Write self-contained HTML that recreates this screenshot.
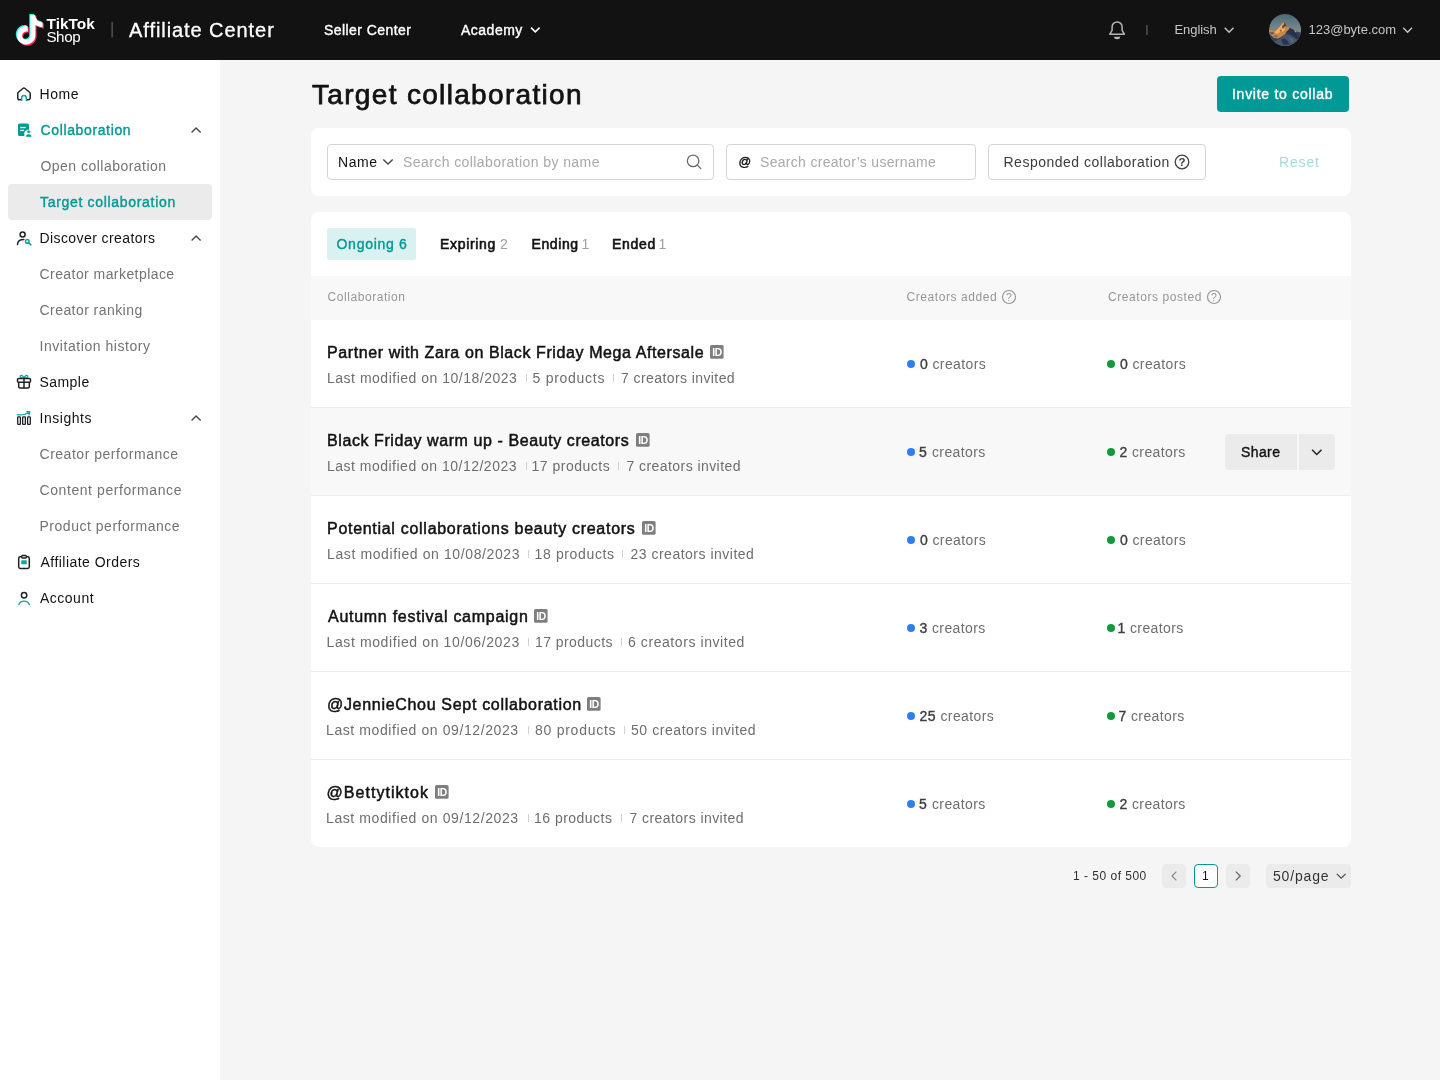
<!DOCTYPE html>
<html lang="en">
<head>
<meta charset="utf-8">
<title>Target collaboration - Affiliate Center</title>
<style>
*{box-sizing:border-box;margin:0;padding:0}
html,body{width:1440px;height:1080px;overflow:hidden;background:#f5f5f5;font-family:"Liberation Sans",sans-serif;color:#121212}
.a{position:absolute}
.t{position:absolute;white-space:nowrap}
.m{-webkit-text-stroke:0.38px currentColor}
.b{font-weight:bold}
#hdr{position:absolute;left:0;top:0;width:1440px;height:60px;background:#121212}
#side{position:absolute;left:0;top:60px;width:220px;height:1020px;background:#fff}
.card{position:absolute;background:#fff;border-radius:8px}
.inp{position:absolute;height:36px;top:144px;border:1px solid #d4d4d4;border-radius:4px;background:#fff}
.sp{position:absolute;width:1px;height:8px;background:#d2d2d2}
.dot{position:absolute;width:8px;height:8px;border-radius:50%}
.idb{position:absolute;width:14px;height:14px}
.idb svg,.ic svg{display:block}
.ic{position:absolute;left:16px;width:16px;height:16px}
.ln{position:absolute;left:311px;width:1040px;height:1px;background:#ededed}
.pb{position:absolute;top:864px;width:24px;height:24px;border-radius:4px;background:#ebebeb}
svg{overflow:visible}
</style>
</head>
<body>
<div id="wrap" style="position:absolute;left:0;top:0;width:1440px;height:1080px;will-change:transform">
<div id="hdr"></div>
<div id="side"></div>
<!-- header logo -->
<svg class="a" style="left:0;top:0" width="120" height="60" viewBox="0 0 120 60">
  <g transform="translate(15 15) scale(1.233)">
    <path id="nt" d="M12.525.02c1.31-.02 2.61-.01 3.91-.02.08 1.53.63 3.09 1.75 4.17 1.12 1.11 2.7 1.62 4.24 1.79v4.03c-1.44-.05-2.89-.35-4.2-.97-.57-.26-1.1-.59-1.62-.93-.01 2.92.01 5.84-.02 8.75-.08 1.4-.54 2.79-1.35 3.94-1.31 1.92-3.58 3.17-5.91 3.21-1.43.08-2.86-.31-4.08-1.03-2.02-1.19-3.44-3.37-3.65-5.71-.02-.5-.03-1-.01-1.49.18-1.9 1.12-3.72 2.58-4.96 1.66-1.44 3.98-2.13 6.15-1.72.02 1.48-.04 2.96-.04 4.44-.99-.32-2.15-.23-3.02.37-.63.41-1.11 1.04-1.36 1.75-.21.51-.15 1.07-.14 1.61.24 1.64 1.82 3.02 3.5 2.87 1.12-.01 2.19-.66 2.77-1.61.19-.33.4-.67.41-1.06.1-1.79.06-3.57.07-5.36.01-4.03-.01-8.05.02-12.07z" fill="#25f4ee" transform="translate(-0.9 -0.9)"/>
    <path d="M12.525.02c1.31-.02 2.61-.01 3.91-.02.08 1.53.63 3.09 1.75 4.17 1.12 1.11 2.7 1.62 4.24 1.79v4.03c-1.44-.05-2.89-.35-4.2-.97-.57-.26-1.1-.59-1.62-.93-.01 2.92.01 5.84-.02 8.75-.08 1.4-.54 2.79-1.35 3.94-1.31 1.92-3.58 3.17-5.91 3.21-1.43.08-2.86-.31-4.08-1.03-2.02-1.19-3.44-3.37-3.65-5.71-.02-.5-.03-1-.01-1.49.18-1.9 1.12-3.72 2.58-4.96 1.66-1.44 3.98-2.13 6.15-1.72.02 1.48-.04 2.96-.04 4.44-.99-.32-2.15-.23-3.02.37-.63.41-1.11 1.04-1.36 1.75-.21.51-.15 1.07-.14 1.61.24 1.64 1.82 3.02 3.5 2.87 1.12-.01 2.19-.66 2.77-1.61.19-.33.4-.67.41-1.06.1-1.79.06-3.57.07-5.36.01-4.03-.01-8.05.02-12.07z" fill="#fe2c55" transform="translate(0.9 0.9)"/>
    <path d="M12.525.02c1.31-.02 2.61-.01 3.91-.02.08 1.53.63 3.09 1.75 4.17 1.12 1.11 2.7 1.62 4.24 1.79v4.03c-1.44-.05-2.89-.35-4.2-.97-.57-.26-1.1-.59-1.62-.93-.01 2.92.01 5.84-.02 8.75-.08 1.4-.54 2.79-1.35 3.94-1.31 1.92-3.58 3.17-5.91 3.21-1.43.08-2.86-.31-4.08-1.03-2.02-1.19-3.44-3.37-3.65-5.71-.02-.5-.03-1-.01-1.49.18-1.9 1.12-3.72 2.58-4.96 1.66-1.44 3.98-2.13 6.15-1.72.02 1.48-.04 2.96-.04 4.44-.99-.32-2.15-.23-3.02.37-.63.41-1.11 1.04-1.36 1.75-.21.51-.15 1.07-.14 1.61.24 1.64 1.82 3.02 3.5 2.87 1.12-.01 2.19-.66 2.77-1.61.19-.33.4-.67.41-1.06.1-1.79.06-3.57.07-5.36.01-4.03-.01-8.05.02-12.07z" fill="#fff"/>
  </g>
  <text x="46.6" y="28.5" font-family="Liberation Sans, sans-serif" font-size="15.4" font-weight="bold" fill="#fff" letter-spacing="0">TikTok</text>
  <text x="46.4" y="42" font-family="Liberation Sans, sans-serif" font-size="15.2" fill="#fff" letter-spacing="-0.4">Shop</text>
  <rect x="111.5" y="22" width="1.3" height="15.5" fill="#5a5a5a"/>
</svg>
<!-- header chevrons, bell, avatar -->
<svg class="a" style="left:0;top:0" width="1440" height="60" viewBox="0 0 1440 60" fill="none">
  <path d="M531 27.6l4.3 4.3 4.3-4.3" stroke="#fff" stroke-width="1.5"/>
  <path d="M1224.7 27.8l4.4 4.4 4.4-4.4" stroke="#c6c6c6" stroke-width="1.4"/>
  <path d="M1403.2 27.8l4.4 4.4 4.4-4.4" stroke="#c6c6c6" stroke-width="1.4"/>
  <rect x="1146.200" y="25" width="1.500" height="10" fill="#505050"/>
  <!-- bell -->
  <path d="M1109.800 34.200l2.300-3.900v-3.400a5 5 0 0 1 10 0v3.400l2.300 3.900z" stroke="#b4b4b4" stroke-width="1.500" stroke-linejoin="round"/>
  <path d="M1114 36.700h6.200a3.100 2.500 0 0 1-6.200 0z" fill="#b4b4b4"/>
  <!-- avatar -->
  <defs>
    <linearGradient id="sky" x1="0" y1="0" x2="0" y2="1"><stop offset="0" stop-color="#4a6573"/><stop offset="0.55" stop-color="#7a9091"/><stop offset="1" stop-color="#7a9091"/></linearGradient>
    <clipPath id="av"><circle cx="20" cy="20" r="16"/></clipPath>
    <filter id="bl" x="-10%" y="-10%" width="120%" height="120%"><feGaussianBlur stdDeviation="0.55"/></filter>
  </defs>
  <g transform="translate(1265 10)" clip-path="url(#av)">
    <rect x="3" y="3" width="34" height="34" fill="url(#sky)"/>
    <g filter="url(#bl)">
      <path d="M2 20.500l2-.8 3-.2 2 1 3-1.200 3-3.300 2-2.500 1.500-1.800 1.600 1.800 1.400 2.500 1.500.5 2.200 1.300 1.800 1.200 2.600 1 1.400.5 2 1.500 2.500.2 2.500 1v15h-36z" fill="#323f57"/>
      <path d="M2 20.500l2-.8 3-.2 2 1 3-1.200 3-3.300 2-2.500 1.500-1.800.8 2.300-.6 2.800 1.800-.8 2 .5 2.700 1.300-1.200 2.200-2.500 1.500-1.300 2.700-3.700 2.600-3.500 1.700-4-.6-3-2.600-2.300-3.200z" fill="#c98848"/>
      <path d="M12 19.600l3.600-3.900 2.700-3.300.3 2.700-1.400 3 2.800.6-1.600 2.800-3.500.8-3 1.500-2.500-1z" fill="#f0b05e"/>
      <path d="M17.300 15.300l1.300-1 .7 2.200-1.100 2-1.400-.4z" fill="#6d4f3e"/>
      <path d="M14.500 20.500l1.500-1.500 1 1.800-1.200 1.500z" fill="#9a6a48"/>
      <path d="M4.500 22.500l3-.8 2 1.400-2.500 1.600z" fill="#5d5a70"/>
      <path d="M8 26l3-1 2.500 1-3 1.800z" fill="#7d6a6c"/>
      <path d="M29 20.300l2.200.2.600 1.600-1.800.3z" fill="#c08c5e"/>
      <path d="M9 31.500l5-2.300 4-3 3.500-2 4 1.200 5 3 4 3-3 6h-20z" fill="#46566f"/>
      <path d="M21.500 22l3.500-4 3 2 3 3.500 3.500 4.500-3.500.2-4-3.200z" fill="#27334a"/>
      <path d="M16 29.800l3.500-1.500 3 2.500 2 4h-6z" fill="#2a364e"/>
      <path d="M24 27l3 1.500 2 3.500-2.500.5z" fill="#5a6a84"/>
    </g>
    </g>
  </g>
</svg>
<!-- sidebar selected bg -->
<div class="a" style="left:8px;top:184px;width:204px;height:36px;background:#ebebeb;border-radius:4px"></div>
<!-- sidebar icons -->
<div class="ic" style="top:86px"><svg width="16" height="16" viewBox="0 0 16 16" fill="none" stroke-width="1.5" stroke-linecap="round" stroke-linejoin="round"><path d="M5 13.700H3.600a1.800 1.800 0 0 1-1.800-1.800V7.600a2 2 0 0 1 .8-1.600l4.300-3.500a1.600 1.600 0 0 1 2.100 0l4.400 3.500a2 2 0 0 1 .8 1.600v4.300a1.800 1.800 0 0 1-1.800 1.800H11" stroke="#222"/><path d="M5.700 14.300v-2.400a2.300 2.300 0 0 1 4.600 0v2.400" stroke="#12a5a0"/></svg></div>
<div class="ic" style="top:122px"><svg width="16" height="16" viewBox="0 0 16 16"><path d="M3.600 1.400h7.800a1.600 1.600 0 0 1 1.600 1.600v5.200h-1.500a3.200 3.200 0 0 0-3.200 3.200v2.600H3.600A1.600 1.600 0 0 1 2 12.400V3a1.600 1.600 0 0 1 1.600-1.600z" fill="#009995"/><rect x="4.300" y="4.900" width="5.400" height="1.300" fill="#fff"/><rect x="4.300" y="7.800" width="3.600" height="1.300" fill="#fff"/><circle cx="12.700" cy="9.800" r="1.800" fill="#009995" stroke="#fff" stroke-width="0.700"/><path d="M9.500 15.100a3.200 3.200 0 0 1 6.400 0z" fill="#009995" stroke="#fff" stroke-width="0.600"/></svg></div>
<div class="ic" style="top:230px"><svg width="16" height="16" viewBox="0 0 16 16" fill="none" stroke-width="1.500" stroke-linecap="round"><circle cx="6.600" cy="4.500" r="2.500" stroke="#222"/><path d="M1.500 14.600c.1-3.300 2.300-5.100 6.300-5.100" stroke="#222"/><circle cx="11.300" cy="11.400" r="1.800" stroke="#12a5a0"/><path d="M12.800 12.900l2 2" stroke="#12a5a0"/></svg></div>
<div class="ic" style="top:374px"><svg width="16" height="16" viewBox="0 0 16 16" fill="none" stroke-width="1.500" stroke-linejoin="round"><path d="M8 4C6.800 1 4.200.6 4.200 2.400 4.200 3.600 6 4 8 4zM8 4c1.200-3 3.800-3.400 3.800-1.600C11.800 3.600 10 4 8 4z" stroke="#12a5a0" stroke-width="1.300"/><rect x="1.500" y="4.400" width="13" height="3.800" rx="1" stroke="#222"/><path d="M2.700 8.300v4.400a1.200 1.200 0 0 0 1.200 1.200h8.200a1.200 1.200 0 0 0 1.200-1.200V8.300M8 4.400v9.500" stroke="#222"/></svg></div>
<div class="ic" style="top:410px"><svg width="16" height="16" viewBox="0 0 16 16" fill="none" stroke-width="1.300" stroke-linejoin="round"><rect x="1.700" y="6.800" width="2.700" height="7.600" rx=".6" stroke="#222"/><rect x="6.650" y="6.800" width="2.700" height="7.600" rx=".6" stroke="#222"/><rect x="11.600" y="6.800" width="2.700" height="7.600" rx=".6" stroke="#222"/><path d="M1.400 4.600c4.500 1 8.500-.2 12.300-2.600M10.800 1.500l3.100.4-.9 3" stroke="#12a5a0" stroke-linecap="round"/></svg></div>
<div class="ic" style="top:554px"><svg width="16" height="16" viewBox="0 0 16 16" fill="none" stroke-width="1.500" stroke-linejoin="round"><rect x="2.700" y="2.800" width="10.600" height="11.600" rx="1.600" stroke="#222"/><rect x="5.700" y="1.500" width="4.600" height="2.400" rx=".8" stroke="#222" fill="#fff"/><rect x="5.300" y="6.300" width="5.400" height="4" fill="#12a5a0"/></svg></div>
<div class="ic" style="top:590px"><svg width="16" height="16" viewBox="0 0 16 16" fill="none" stroke-width="1.500" stroke-linecap="round"><circle cx="8.100" cy="5.200" r="2.700" stroke="#222"/><path d="M2.900 14.600c.7-2.300 2.600-3.500 5.200-3.500s4.500 1.200 5.200 3.500" stroke="#12a5a0" stroke-width="1.400"/></svg></div>
<!-- sidebar chevrons -->
<svg class="a" style="left:0;top:0" width="220" height="640" viewBox="0 0 220 640" fill="none" stroke="#4a4a4a" stroke-width="1.400"><path d="M191.600 132.600l4.500-4.500 4.500 4.500"/><path d="M191.600 240.600l4.500-4.500 4.500 4.500"/><path d="M191.600 420.600l4.500-4.500 4.500 4.500"/></svg>
<!-- main -->
<div class="a" style="left:1217px;top:76px;width:132px;height:36px;background:#009995;border-radius:4px"></div>
<div class="card" style="left:311px;top:128px;width:1040px;height:68px"></div>
<div class="inp" style="left:327px;width:387px"></div>
<div class="inp" style="left:726px;width:250px"></div>
<div class="inp" style="left:988px;width:218px"></div>
<svg class="a" style="left:0;top:140px" width="1440" height="44" viewBox="0 140 1440 44" fill="none">
  <path d="M383.300 159.400l4.700 4.600 4.700-4.600" stroke="#4a4a4a" stroke-width="1.400"/>
  <circle cx="693.100" cy="160.900" r="5.750" stroke="#6a6a6a" stroke-width="1.300"/><path d="M697.300 165.100l3.500 3.500" stroke="#6a6a6a" stroke-width="1.300" stroke-linecap="round"/>
  <circle cx="1182" cy="162" r="6.800" stroke="#454545" stroke-width="1.300"/>
  <text x="1182" y="166.200" text-anchor="middle" font-family="Liberation Sans, sans-serif" font-size="11.500" font-weight="bold" fill="#3d3d3d">?</text>
</svg>
<div class="card" style="left:311px;top:212px;width:1040px;height:635px"></div>
<div class="a" style="left:327px;top:228px;width:89px;height:32px;background:#d9f1f0;border-radius:2px"></div>
<div class="a" style="left:311px;top:276px;width:1040px;height:44px;background:#f8f8f8"></div>
<svg class="a" style="left:0;top:280px" width="1440" height="34" viewBox="0 280 1440 34" fill="none">
  <circle cx="1009" cy="297" r="6.500" stroke="#969696" stroke-width="1.200"/>
  <text x="1009" y="300.800" text-anchor="middle" font-family="Liberation Sans, sans-serif" font-size="10.500" fill="#969696">?</text>
  <circle cx="1214" cy="297" r="6.500" stroke="#969696" stroke-width="1.200"/>
  <text x="1214" y="300.800" text-anchor="middle" font-family="Liberation Sans, sans-serif" font-size="10.500" fill="#969696">?</text>
</svg>
<div class="a" style="left:311px;top:408px;width:1040px;height:88px;background:#f8f8f8"></div>
<div class="ln" style="top:407px"></div>
<div class="ln" style="top:495px"></div>
<div class="ln" style="top:583px"></div>
<div class="ln" style="top:671px"></div>
<div class="ln" style="top:759px"></div>
<!-- share -->
<div class="a" style="left:1225px;top:434px;width:72px;height:36px;background:#ebebeb;border-radius:4px 0 0 4px"></div>
<div class="a" style="left:1299px;top:434px;width:36px;height:36px;background:#ebebeb;border-radius:0 4px 4px 0"></div>
<svg class="a" style="left:1299px;top:434px" width="36" height="36" viewBox="0 0 36 36" fill="none"><path d="M13.100 15.800l4.700 4.700 4.700-4.700" stroke="#222" stroke-width="1.500"/></svg>
<!-- pagination -->
<div class="pb" style="left:1162px"></div>
<div class="pb" style="left:1194px;background:#fff;border:1px solid #009995"></div>
<div class="pb" style="left:1226px"></div>
<div class="pb" style="left:1266px;width:85px"></div>
<svg class="a" style="left:1160px;top:864px" width="200" height="24" viewBox="1160 864 200 24" fill="none" stroke-width="1.300"><path d="M1176.400 871.600l-4.400 4.400 4.400 4.400" stroke="#8a8a8a"/><path d="M1235.800 871.600l4.400 4.400-4.400 4.400" stroke="#6a6a6a"/><path d="M1336.800 873.800l4.400 4.400 4.400-4.400" stroke="#4a4a4a" stroke-width="1.200"/></svg>

<span class="t m" style="left:129.00px;top:16.00px;font-size:20px;line-height:29px;color:#ffffff;letter-spacing:0.933px;-webkit-text-stroke-width:0.3px;">Affiliate Center</span>
<span class="t m" style="left:324.00px;top:20.00px;font-size:14px;line-height:20px;color:#ffffff;letter-spacing:0.433px;">Seller Center</span>
<span class="t m" style="left:461.00px;top:20.00px;font-size:14px;line-height:20px;color:#ffffff;letter-spacing:0.500px;">Academy</span>
<span class="t" style="left:1174.50px;top:20.00px;font-size:13px;line-height:19px;color:#c6c6c6;letter-spacing:-0.083px;">English</span>
<span class="t" style="left:1308.50px;top:20.00px;font-size:13px;line-height:19px;color:#c6c6c6;">123@byte.com</span>
<span class="t" style="left:39.50px;top:84.00px;font-size:14px;line-height:20px;color:#121212;letter-spacing:0.600px;">Home</span>
<span class="t m" style="left:40.50px;top:120.00px;font-size:14px;line-height:20px;color:#009995;letter-spacing:0.633px;">Collaboration</span>
<span class="t" style="left:40.50px;top:156.00px;font-size:14px;line-height:20px;color:#737373;letter-spacing:0.471px;">Open collaboration</span>
<span class="t m" style="left:40.00px;top:192.00px;font-size:14px;line-height:20px;color:#009995;letter-spacing:0.684px;">Target collaboration</span>
<span class="t" style="left:39.50px;top:228.00px;font-size:14px;line-height:20px;color:#121212;letter-spacing:0.413px;">Discover creators</span>
<span class="t" style="left:39.50px;top:264.00px;font-size:14px;line-height:20px;color:#737373;letter-spacing:0.433px;">Creator marketplace</span>
<span class="t" style="left:39.50px;top:300.00px;font-size:14px;line-height:20px;color:#737373;letter-spacing:0.443px;">Creator ranking</span>
<span class="t" style="left:39.50px;top:336.00px;font-size:14px;line-height:20px;color:#737373;letter-spacing:0.553px;">Invitation history</span>
<span class="t" style="left:39.50px;top:372.00px;font-size:14px;line-height:20px;color:#121212;letter-spacing:0.440px;">Sample</span>
<span class="t" style="left:39.50px;top:408.00px;font-size:14px;line-height:20px;color:#121212;letter-spacing:0.543px;">Insights</span>
<span class="t" style="left:39.50px;top:444.00px;font-size:14px;line-height:20px;color:#737373;letter-spacing:0.522px;">Creator performance</span>
<span class="t" style="left:39.50px;top:480.00px;font-size:14px;line-height:20px;color:#737373;letter-spacing:0.578px;">Content performance</span>
<span class="t" style="left:39.50px;top:516.00px;font-size:14px;line-height:20px;color:#737373;letter-spacing:0.522px;">Product performance</span>
<span class="t" style="left:40.50px;top:552.00px;font-size:14px;line-height:20px;color:#121212;letter-spacing:0.467px;">Affiliate Orders</span>
<span class="t" style="left:40.00px;top:588.00px;font-size:14px;line-height:20px;color:#121212;letter-spacing:0.500px;">Account</span>
<span class="t m" style="left:312.00px;top:74.00px;font-size:28px;line-height:41px;color:#121212;letter-spacing:1.326px;-webkit-text-stroke-width:0.75px;">Target collaboration</span>
<span class="t m" style="left:1232.00px;top:84.00px;font-size:14px;line-height:20px;color:#ffffff;letter-spacing:0.733px;">Invite to collab</span>
<span class="t" style="left:338.00px;top:152.00px;font-size:14px;line-height:20px;color:#121212;letter-spacing:0.533px;">Name</span>
<span class="t" style="left:403.00px;top:152.00px;font-size:14px;line-height:20px;color:#a9a9a9;letter-spacing:0.415px;">Search collaboration by name</span>
<span class="t m" style="left:738.50px;top:153.00px;font-size:12.5px;line-height:18px;color:#121212;">@</span>
<span class="t" style="left:760.00px;top:152.00px;font-size:14px;line-height:20px;color:#a9a9a9;letter-spacing:0.308px;">Search creator’s username</span>
<span class="t" style="left:1003.50px;top:152.00px;font-size:14px;line-height:20px;color:#3d3d3d;letter-spacing:0.500px;">Responded collaboration</span>
<span class="t" style="left:1279.00px;top:152.00px;font-size:14px;line-height:20px;color:#a6dcd9;letter-spacing:0.850px;">Reset</span>
<span class="t m" style="left:336.50px;top:234.00px;font-size:14px;line-height:20px;color:#009995;letter-spacing:0.725px;">Ongoing 6</span>
<span class="t m" style="left:440.00px;top:234.00px;font-size:14px;line-height:20px;color:#121212;letter-spacing:0.686px;-webkit-text-stroke-width:0.6px;">Expiring</span>
<span class="t" style="left:500.00px;top:234.00px;font-size:14px;line-height:20px;color:#a0a0a0;">2</span>
<span class="t m" style="left:531.50px;top:234.00px;font-size:14px;line-height:20px;color:#121212;letter-spacing:0.600px;-webkit-text-stroke-width:0.6px;">Ending</span>
<span class="t" style="left:581.50px;top:234.00px;font-size:14px;line-height:20px;color:#a0a0a0;">1</span>
<span class="t m" style="left:612.00px;top:234.00px;font-size:14px;line-height:20px;color:#121212;letter-spacing:0.700px;-webkit-text-stroke-width:0.6px;">Ended</span>
<span class="t" style="left:658.50px;top:234.00px;font-size:14px;line-height:20px;color:#a0a0a0;">1</span>
<span class="t" style="left:327.50px;top:289.00px;font-size:12px;line-height:17px;color:#969696;letter-spacing:0.567px;">Collaboration</span>
<span class="t" style="left:906.50px;top:289.00px;font-size:12px;line-height:17px;color:#969696;letter-spacing:0.577px;">Creators added</span>
<span class="t" style="left:1108.00px;top:289.00px;font-size:12px;line-height:17px;color:#969696;letter-spacing:0.571px;">Creators posted</span>
<span class="t m" style="left:327.00px;top:341.00px;font-size:16px;line-height:23px;color:#121212;letter-spacing:0.596px;-webkit-text-stroke-width:0.5px;">Partner with Zara on Black Friday Mega Aftersale</span>
<span class="t" style="left:327.00px;top:368.00px;font-size:14px;line-height:20px;color:#6e6e6e;letter-spacing:0.508px;">Last modified on 10/18/2023</span>
<span class="t" style="left:532.50px;top:368.00px;font-size:14px;line-height:20px;color:#6e6e6e;letter-spacing:0.733px;">5 products</span>
<span class="t" style="left:621.00px;top:368.00px;font-size:14px;line-height:20px;color:#6e6e6e;letter-spacing:0.412px;">7 creators invited</span>
<span class="t m" style="left:920.00px;top:354.00px;font-size:14px;line-height:20px;color:#3f3f3f;">0</span>
<span class="t" style="left:932.50px;top:354.00px;font-size:14px;line-height:20px;color:#6e6e6e;letter-spacing:0.371px;">creators</span>
<span class="t m" style="left:1120.00px;top:354.00px;font-size:14px;line-height:20px;color:#3f3f3f;">0</span>
<span class="t" style="left:1132.50px;top:354.00px;font-size:14px;line-height:20px;color:#6e6e6e;letter-spacing:0.371px;">creators</span>
<span class="t m" style="left:327.00px;top:429.00px;font-size:16px;line-height:23px;color:#121212;letter-spacing:0.584px;-webkit-text-stroke-width:0.5px;">Black Friday warm up - Beauty creators</span>
<span class="t" style="left:327.00px;top:456.00px;font-size:14px;line-height:20px;color:#6e6e6e;letter-spacing:0.492px;">Last modified on 10/12/2023</span>
<span class="t" style="left:531.50px;top:456.00px;font-size:14px;line-height:20px;color:#6e6e6e;letter-spacing:0.500px;">17 products</span>
<span class="t" style="left:626.50px;top:456.00px;font-size:14px;line-height:20px;color:#6e6e6e;letter-spacing:0.435px;">7 creators invited</span>
<span class="t m" style="left:919.00px;top:442.00px;font-size:14px;line-height:20px;color:#3f3f3f;">5</span>
<span class="t" style="left:932.00px;top:442.00px;font-size:14px;line-height:20px;color:#6e6e6e;letter-spacing:0.371px;">creators</span>
<span class="t m" style="left:1119.50px;top:442.00px;font-size:14px;line-height:20px;color:#3f3f3f;">2</span>
<span class="t" style="left:1132.00px;top:442.00px;font-size:14px;line-height:20px;color:#6e6e6e;letter-spacing:0.371px;">creators</span>
<span class="t m" style="left:327.00px;top:517.00px;font-size:16px;line-height:23px;color:#121212;letter-spacing:0.708px;-webkit-text-stroke-width:0.5px;">Potential collaborations beauty creators</span>
<span class="t" style="left:327.00px;top:544.00px;font-size:14px;line-height:20px;color:#6e6e6e;letter-spacing:0.608px;">Last modified on 10/08/2023</span>
<span class="t" style="left:534.50px;top:544.00px;font-size:14px;line-height:20px;color:#6e6e6e;letter-spacing:0.640px;">18 products</span>
<span class="t" style="left:630.50px;top:544.00px;font-size:14px;line-height:20px;color:#6e6e6e;letter-spacing:0.500px;">23 creators invited</span>
<span class="t m" style="left:920.00px;top:530.00px;font-size:14px;line-height:20px;color:#3f3f3f;">0</span>
<span class="t" style="left:932.50px;top:530.00px;font-size:14px;line-height:20px;color:#6e6e6e;letter-spacing:0.371px;">creators</span>
<span class="t m" style="left:1120.00px;top:530.00px;font-size:14px;line-height:20px;color:#3f3f3f;">0</span>
<span class="t" style="left:1132.50px;top:530.00px;font-size:14px;line-height:20px;color:#6e6e6e;letter-spacing:0.371px;">creators</span>
<span class="t m" style="left:328.00px;top:605.00px;font-size:16px;line-height:23px;color:#121212;letter-spacing:0.722px;-webkit-text-stroke-width:0.5px;">Autumn festival campaign</span>
<span class="t" style="left:326.50px;top:632.00px;font-size:14px;line-height:20px;color:#6e6e6e;letter-spacing:0.615px;">Last modified on 10/06/2023</span>
<span class="t" style="left:535.00px;top:632.00px;font-size:14px;line-height:20px;color:#6e6e6e;letter-spacing:0.440px;">17 products</span>
<span class="t" style="left:628.00px;top:632.00px;font-size:14px;line-height:20px;color:#6e6e6e;letter-spacing:0.576px;">6 creators invited</span>
<span class="t m" style="left:919.50px;top:618.00px;font-size:14px;line-height:20px;color:#3f3f3f;">3</span>
<span class="t" style="left:932.00px;top:618.00px;font-size:14px;line-height:20px;color:#6e6e6e;letter-spacing:0.371px;">creators</span>
<span class="t m" style="left:1117.50px;top:618.00px;font-size:14px;line-height:20px;color:#3f3f3f;">1</span>
<span class="t" style="left:1130.00px;top:618.00px;font-size:14px;line-height:20px;color:#6e6e6e;letter-spacing:0.371px;">creators</span>
<span class="t m" style="left:327.00px;top:693.00px;font-size:16px;line-height:23px;color:#121212;letter-spacing:0.690px;-webkit-text-stroke-width:0.5px;">@JennieChou Sept collaboration</span>
<span class="t" style="left:326.00px;top:720.00px;font-size:14px;line-height:20px;color:#6e6e6e;letter-spacing:0.592px;">Last modified on 09/12/2023</span>
<span class="t" style="left:535.00px;top:720.00px;font-size:14px;line-height:20px;color:#6e6e6e;letter-spacing:0.740px;">80 products</span>
<span class="t" style="left:631.00px;top:720.00px;font-size:14px;line-height:20px;color:#6e6e6e;letter-spacing:0.567px;">50 creators invited</span>
<span class="t m" style="left:919.50px;top:706.00px;font-size:14px;line-height:20px;color:#3f3f3f;letter-spacing:0.500px;">25</span>
<span class="t" style="left:940.50px;top:706.00px;font-size:14px;line-height:20px;color:#6e6e6e;letter-spacing:0.371px;">creators</span>
<span class="t m" style="left:1118.50px;top:706.00px;font-size:14px;line-height:20px;color:#3f3f3f;">7</span>
<span class="t" style="left:1131.00px;top:706.00px;font-size:14px;line-height:20px;color:#6e6e6e;letter-spacing:0.371px;">creators</span>
<span class="t m" style="left:326.50px;top:781.00px;font-size:16px;line-height:23px;color:#121212;letter-spacing:1.036px;-webkit-text-stroke-width:0.5px;">@Bettytiktok</span>
<span class="t" style="left:326.00px;top:808.00px;font-size:14px;line-height:20px;color:#6e6e6e;letter-spacing:0.592px;">Last modified on 09/12/2023</span>
<span class="t" style="left:534.00px;top:808.00px;font-size:14px;line-height:20px;color:#6e6e6e;letter-spacing:0.480px;">16 products</span>
<span class="t" style="left:629.50px;top:808.00px;font-size:14px;line-height:20px;color:#6e6e6e;letter-spacing:0.435px;">7 creators invited</span>
<span class="t m" style="left:919.00px;top:794.00px;font-size:14px;line-height:20px;color:#3f3f3f;">5</span>
<span class="t" style="left:932.00px;top:794.00px;font-size:14px;line-height:20px;color:#6e6e6e;letter-spacing:0.371px;">creators</span>
<span class="t m" style="left:1119.50px;top:794.00px;font-size:14px;line-height:20px;color:#3f3f3f;">2</span>
<span class="t" style="left:1132.00px;top:794.00px;font-size:14px;line-height:20px;color:#6e6e6e;letter-spacing:0.371px;">creators</span>
<span class="t m" style="left:1241.00px;top:442.00px;font-size:14px;line-height:20px;color:#121212;letter-spacing:0.400px;">Share</span>
<span class="t" style="left:1073.00px;top:868.00px;font-size:12px;line-height:17px;color:#303030;letter-spacing:0.492px;">1 - 50 of 500</span>
<span class="t" style="left:1202.00px;top:868.00px;font-size:12px;line-height:17px;color:#121212;">1</span>
<span class="t" style="left:1273.00px;top:866.00px;font-size:14px;line-height:20px;color:#333333;letter-spacing:0.833px;">50/page</span>
<div class="sp" style="left:526px;top:374px"></div>
<div class="sp" style="left:613px;top:374px"></div>
<div class="idb" style="left:710px;top:345px"><svg width="14" height="14" viewBox="0 0 14 14"><rect width="13.6" height="13.8" rx="1.6" fill="#7f7f7f"/><text x="7.1" y="10.9" text-anchor="middle" font-family="Liberation Sans, sans-serif" font-size="10.3" font-weight="bold" fill="#fff" letter-spacing="-0.3">ID</text></svg></div>
<div class="dot" style="left:907px;top:360px;background:#2f7df6"></div>
<div class="dot" style="left:1107px;top:360px;background:#109a3c"></div>
<div class="sp" style="left:526px;top:462px"></div>
<div class="sp" style="left:618px;top:462px"></div>
<div class="idb" style="left:636px;top:433px"><svg width="14" height="14" viewBox="0 0 14 14"><rect width="13.6" height="13.8" rx="1.6" fill="#7f7f7f"/><text x="7.1" y="10.9" text-anchor="middle" font-family="Liberation Sans, sans-serif" font-size="10.3" font-weight="bold" fill="#fff" letter-spacing="-0.3">ID</text></svg></div>
<div class="dot" style="left:907px;top:448px;background:#2f7df6"></div>
<div class="dot" style="left:1107px;top:448px;background:#109a3c"></div>
<div class="sp" style="left:528px;top:550px"></div>
<div class="sp" style="left:622px;top:550px"></div>
<div class="idb" style="left:642px;top:521px"><svg width="14" height="14" viewBox="0 0 14 14"><rect width="13.6" height="13.8" rx="1.6" fill="#7f7f7f"/><text x="7.1" y="10.9" text-anchor="middle" font-family="Liberation Sans, sans-serif" font-size="10.3" font-weight="bold" fill="#fff" letter-spacing="-0.3">ID</text></svg></div>
<div class="dot" style="left:907px;top:536px;background:#2f7df6"></div>
<div class="dot" style="left:1107px;top:536px;background:#109a3c"></div>
<div class="sp" style="left:528px;top:638px"></div>
<div class="sp" style="left:621px;top:638px"></div>
<div class="idb" style="left:534px;top:609px"><svg width="14" height="14" viewBox="0 0 14 14"><rect width="13.6" height="13.8" rx="1.6" fill="#7f7f7f"/><text x="7.1" y="10.9" text-anchor="middle" font-family="Liberation Sans, sans-serif" font-size="10.3" font-weight="bold" fill="#fff" letter-spacing="-0.3">ID</text></svg></div>
<div class="dot" style="left:907px;top:624px;background:#2f7df6"></div>
<div class="dot" style="left:1107px;top:624px;background:#109a3c"></div>
<div class="sp" style="left:528px;top:726px"></div>
<div class="sp" style="left:624px;top:726px"></div>
<div class="idb" style="left:587px;top:697px"><svg width="14" height="14" viewBox="0 0 14 14"><rect width="13.6" height="13.8" rx="1.6" fill="#7f7f7f"/><text x="7.1" y="10.9" text-anchor="middle" font-family="Liberation Sans, sans-serif" font-size="10.3" font-weight="bold" fill="#fff" letter-spacing="-0.3">ID</text></svg></div>
<div class="dot" style="left:907px;top:712px;background:#2f7df6"></div>
<div class="dot" style="left:1107px;top:712px;background:#109a3c"></div>
<div class="sp" style="left:528px;top:814px"></div>
<div class="sp" style="left:621px;top:814px"></div>
<div class="idb" style="left:435px;top:785px"><svg width="14" height="14" viewBox="0 0 14 14"><rect width="13.6" height="13.8" rx="1.6" fill="#7f7f7f"/><text x="7.1" y="10.9" text-anchor="middle" font-family="Liberation Sans, sans-serif" font-size="10.3" font-weight="bold" fill="#fff" letter-spacing="-0.3">ID</text></svg></div>
<div class="dot" style="left:907px;top:800px;background:#2f7df6"></div>
<div class="dot" style="left:1107px;top:800px;background:#109a3c"></div>
</div>
</body>
</html>
